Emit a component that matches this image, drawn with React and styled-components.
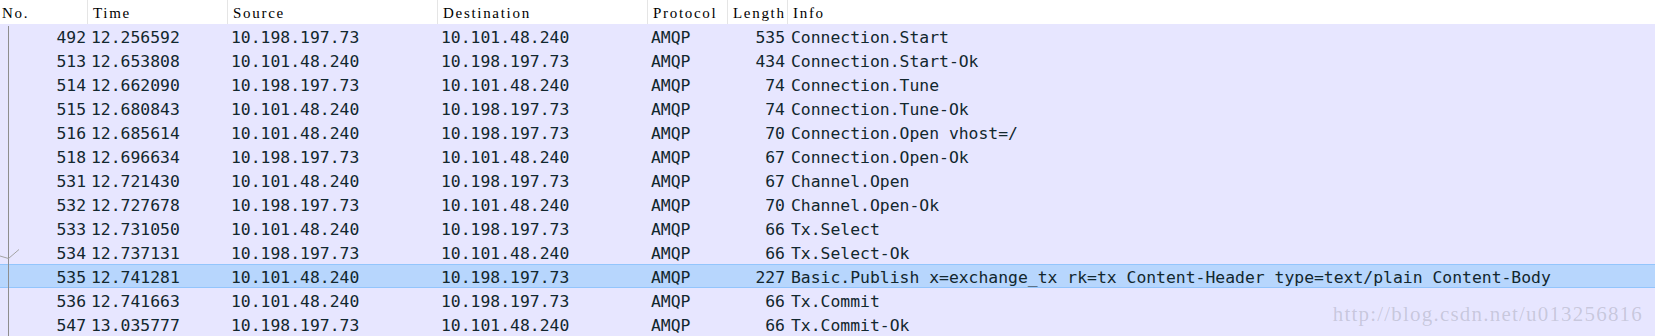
import React from "react";
import styled, { createGlobalStyle } from "styled-components";

const Global = createGlobalStyle`
  html, body { margin: 0; padding: 0; background: #ffffff; overflow: hidden; }
  #root { width: 1655px; height: 336px; }
`;

const COLS = "88px 140px 210px 210px 80px 60px 1fr";

const Table = styled.div`
  position: relative;
  width: 1655px;
  height: 336px;
  overflow: hidden;
  background: #ffffff;
`;

const Header = styled.div`
  display: grid;
  grid-template-columns: ${COLS};
  height: 24px;
  background: #ffffff;
`;

const HeadCell = styled.div`
  box-sizing: border-box;
  height: 24px;
  padding: 3px 0 0 ${(p) => (p.$first ? 2 : 5)}px;
  line-height: 20px;
  font-family: "Liberation Serif", serif;
  font-size: 15px;
  letter-spacing: 1.7px;
  color: #000000;
  white-space: nowrap;
  overflow: hidden;
  border-left: ${(p) => (p.$first ? "none" : "1px solid #e5e5e5")};
  margin-left: ${(p) => (p.$first ? 0 : -1)}px;
`;

const Row = styled.div`
  display: grid;
  grid-template-columns: ${COLS};
  height: 24px;
  box-sizing: border-box;
  background: ${(p) => (p.$selected ? "#b7d6fd" : "#e7e6ff")};
  box-shadow: ${(p) =>
    p.$selected ? "inset 0 1px #93c5fc, inset 0 -1px #93c5fc" : "none"};
`;

const Cell = styled.div`
  position: relative;
  box-sizing: border-box;
  height: 24px;
  padding: 3px ${(p) => (p.$right ? 3 : 0)}px 0 ${(p) => (p.$right ? 0 : 3)}px;
  line-height: 21px;
  font-family: "DejaVu Sans Mono", monospace;
  font-size: 16.4px;
  color: #12272e;
  text-align: ${(p) => (p.$right ? "right" : "left")};
  white-space: nowrap;
  overflow: ${(p) => (p.$clip ? "hidden" : "visible")};
`;

const NoCell = styled(Cell)`
  padding-right: 2px;
`;

const Mark = styled.svg`
  position: absolute;
  left: 0;
  top: 0;
  width: 22px;
  height: 24px;
  pointer-events: none;
`;

const Watermark = styled.div`
  position: absolute;
  right: 12px;
  top: 304px;
  font-family: "Liberation Serif", serif;
  font-size: 21px;
  line-height: 21px;
  letter-spacing: 1.2px;
  color: rgba(110, 110, 120, 0.26);
  white-space: nowrap;
  pointer-events: none;
`;

const A = "10.198.197.73";
const B = "10.101.48.240";

const rows = [
  ["492", "12.256592", A, B, "535", "Connection.Start"],
  ["513", "12.653808", B, A, "434", "Connection.Start-Ok"],
  ["514", "12.662090", A, B, "74", "Connection.Tune"],
  ["515", "12.680843", B, A, "74", "Connection.Tune-Ok"],
  ["516", "12.685614", B, A, "70", "Connection.Open vhost=/"],
  ["518", "12.696634", A, B, "67", "Connection.Open-Ok"],
  ["531", "12.721430", B, A, "67", "Channel.Open"],
  ["532", "12.727678", A, B, "70", "Channel.Open-Ok"],
  ["533", "12.731050", B, A, "66", "Tx.Select"],
  ["534", "12.737131", A, B, "66", "Tx.Select-Ok"],
  [
    "535",
    "12.741281",
    B,
    A,
    "227",
    "Basic.Publish x=exchange_tx rk=tx Content-Header type=text/plain Content-Body",
  ],
  ["536", "12.741663", B, A, "66", "Tx.Commit"],
  ["547", "13.035777", A, B, "66", "Tx.Commit-Ok"],
];

function RelatedMark({ first, ack }) {
  return (
    <Mark viewBox="0 0 22 24">
      <line
        x1="8.5"
        y1={first ? 2 : 0}
        x2="8.5"
        y2="24"
        stroke="#8e8e8e"
        strokeWidth="1"
      />
      {ack && (
        <polyline
          points="0,16 8.5,18.5 19,9.5"
          fill="none"
          stroke="#a3a3a3"
          strokeWidth="1"
        />
      )}
    </Mark>
  );
}

const headers = ["No.", "Time", "Source", "Destination", "Protocol", "Length", "Info"];

export default function App() {
  return (
    <>
      <Global />
      <Table>
        <Header>
          {headers.map((h, i) => (
            <HeadCell key={h} $first={i === 0}>
              {h}
            </HeadCell>
          ))}
        </Header>
        {rows.map((r, i) => (
          <Row key={r[0]} $selected={r[0] === "535"}>
            <NoCell $right>
              <RelatedMark first={i === 0} ack={r[0] === "534"} />
              {r[0]}
            </NoCell>
            <Cell $clip>{r[1]}</Cell>
            <Cell $clip>{r[2]}</Cell>
            <Cell $clip>{r[3]}</Cell>
            <Cell $clip>AMQP</Cell>
            <Cell $right>{r[4]}</Cell>
            <Cell $clip>{r[5]}</Cell>
          </Row>
        ))}
        <Watermark>http://blog.csdn.net/u013256816</Watermark>
      </Table>
    </>
  );
}
